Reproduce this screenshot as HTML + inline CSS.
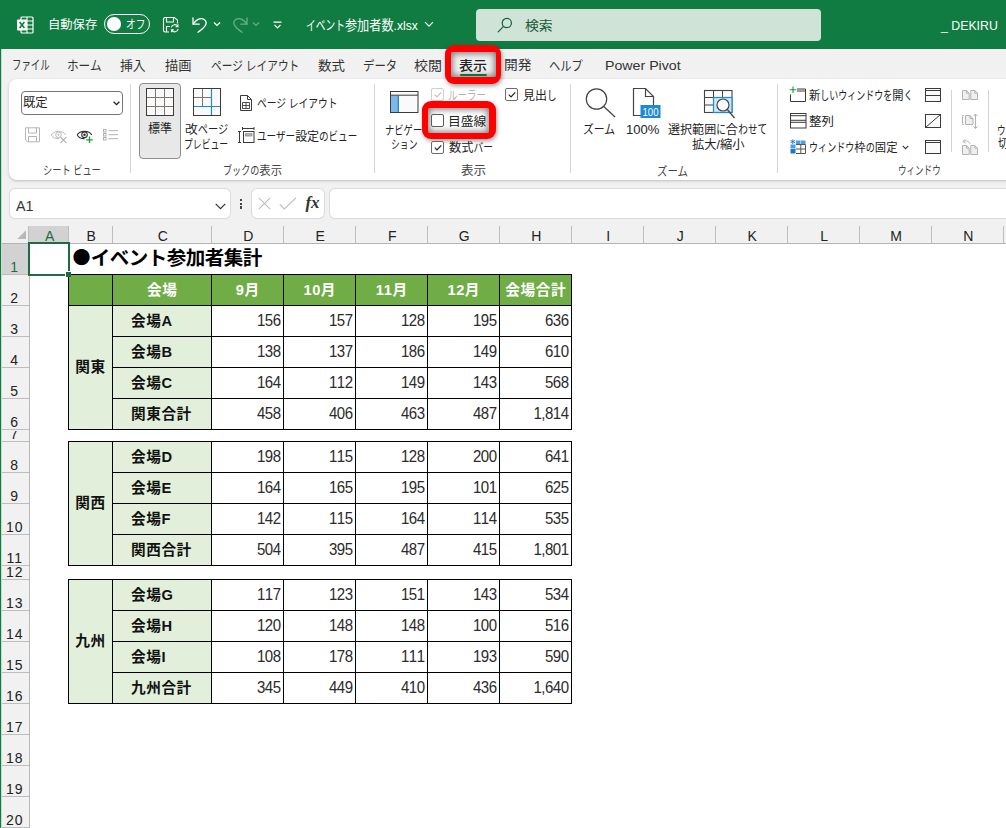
<!DOCTYPE html>
<html lang="ja"><head><meta charset="utf-8"><title>イベント参加者数.xlsx - Excel</title>
<style>
html,body{margin:0;padding:0}
body{width:1006px;height:828px;overflow:hidden;position:relative;background:#fff;font-family:"Liberation Sans","Noto Sans CJK JP",sans-serif;font-size:12px;color:#222}
.a{position:absolute}
.t{position:absolute;white-space:nowrap;line-height:1;transform-origin:0 0}
#title{left:0;top:0;width:1006px;height:49px;background:#107c41}
#lb{left:0;top:49px;width:1px;height:779px;background:#107c41;border-right:1px solid #c4dccf}
#chrome{left:2px;top:49px;width:1004px;height:177px;background:#f1f1f1}
#panel{left:9px;top:79px;width:1010px;height:101px;background:#fff;border-radius:8px;box-shadow:0 1px 3px rgba(0,0,0,.22)}
#colhead{left:2px;top:226px;width:1004px;height:17px;background:#f1f1f1}
#rowhead{left:2px;top:243px;width:27px;height:585px;background:#f1f1f1}
.k{display:inline-block;transform:scaleX(.8);transform-origin:0 50%}
.sep{position:absolute;width:1px;background:#d4d4d4}
.box{position:absolute;background:#fff;border-radius:5px;box-shadow:0 0 0 1px #dcdcdc,0 1px 1px rgba(0,0,0,.10)}
.ch{position:absolute;top:226px;height:17px;text-align:center;padding-left:2.4px;box-sizing:border-box;font-size:14px;line-height:20px;color:#222;font-family:"Liberation Sans",sans-serif}
.rh{position:absolute;left:2px;width:27px;overflow:hidden;font-size:14px;color:#222;font-family:"Liberation Sans",sans-serif;line-height:1}
.rh span{position:absolute;left:-0.8px;width:27px;text-align:center;letter-spacing:1px}
.cell{position:absolute;box-sizing:border-box;white-space:nowrap;overflow:hidden}
.num{text-align:right;font-size:15px;letter-spacing:-0.5px;color:#2b2b2b;font-kerning:none}
.num span{display:inline-block;line-height:1;transform:scaleY(1.12);transform-origin:50% 86%}
.lab{font-weight:bold;font-size:14.67px;letter-spacing:.55px;color:#111}
.hd{font-weight:bold;font-size:14.67px;letter-spacing:.55px;padding-left:.5px;color:#fff;text-align:center}
.cb{position:absolute;width:11px;height:11px;border:1px solid #6a6a6a;border-radius:2px;background:#fff}
</style></head><body>
<div class="a" id="title"></div>
<div class="a" id="lb"></div>
<div class="a" id="chrome"></div>
<div class="a" id="panel"></div>

<!-- ===== title bar ===== -->
<svg class="a" style="left:16px;top:16px" width="18" height="18" viewBox="0 0 18 18">
  <rect x="5" y="1" width="12" height="16" rx="1" fill="none" stroke="#fff" stroke-width="1.2"/>
  <path d="M5 5H17M5 9H17M5 13H17M11 1V17" stroke="#fff" stroke-width="1.1" fill="none"/>
  <rect x="1" y="3.5" width="10" height="11" rx="0.8" fill="#fff"/>
  <path d="M3.6 6L8.4 12M8.4 6L3.6 12" stroke="#107c41" stroke-width="1.6" fill="none"/>
</svg>
<div class="t" style="left:47.7px;top:19.4px;font-size:12px;color:#fff;transform:scaleX(1.026);">自動保存</div>
<div class="a" style="left:104px;top:14px;width:43.500px;height:18px;border:1px solid #fff;border-radius:10px"></div>
<div class="a" style="left:107.300px;top:17.300px;width:13.500px;height:13.500px;border-radius:50%;background:#fff"></div>
<div class="t" style="left:125.8px;top:19.3px;font-size:12.5px;color:#fff;transform:scaleX(0.967);"><span class="k" style="margin-right:-5.00px">オフ</span></div>
<!-- save -->
<svg class="a" style="left:162px;top:16px" width="18" height="18" viewBox="0 0 18 18" fill="none" stroke="#fff" stroke-width="1.1">
  <path d="M7 16H3.2A1.7 1.7 0 0 1 1.5 14.300V3.200A1.700 1.700 0 0 1 3.200 1.500H12.500L15.500 4.200V7.500"/>
  <path d="M4.500 1.500V6H11.500V1.500"/>
  <path d="M4.500 16V10.500H8"/>
  <path d="M9.300 11.300A3.600 3.600 0 0 1 15.800 10.300M16 8.300V10.600H13.700"/>
  <path d="M16.200 13.200A3.600 3.600 0 0 1 9.700 14.200M9.500 16.200V13.900H11.800"/>
</svg>
<!-- undo -->
<svg class="a" style="left:191px;top:16px" width="18" height="18" viewBox="0 0 18 18" fill="none" stroke="#fff" stroke-width="1.3" stroke-linecap="round" stroke-linejoin="round">
  <path d="M2 2V8.200H8.200"/>
  <path d="M2.300 8C5.500 2.500 11.500 1.200 14.200 4.400C16.800 7.500 14 11.500 7 16.200"/>
</svg>
<svg class="a" style="left:213px;top:21px" width="8" height="6" viewBox="0 0 8 6" fill="none" stroke="#fff" stroke-width="1.2"><path d="M1 1.500L4 4.500L7 1.500"/></svg>
<!-- redo (dim) -->
<svg class="a" style="left:231px;top:16px;opacity:.38" width="18" height="18" viewBox="0 0 18 18" fill="none" stroke="#fff" stroke-width="1.3" stroke-linecap="round" stroke-linejoin="round">
  <path d="M16 2V8.200H9.800"/>
  <path d="M15.700 8C12.500 2.500 6.500 1.200 3.800 4.400C1.200 7.500 4 11.500 11 16.200"/>
</svg>
<svg class="a" style="left:252px;top:21px;opacity:.38" width="8" height="6" viewBox="0 0 8 6" fill="none" stroke="#fff" stroke-width="1.2"><path d="M1 1.500L4 4.500L7 1.500"/></svg>
<!-- customize -->
<svg class="a" style="left:273px;top:21px" width="9" height="8" viewBox="0 0 9 8" fill="none" stroke="#fff" stroke-width="1.2"><path d="M0.500 1.200H8.500M1.500 3.800L4.500 6.800L7.500 3.800"/></svg>
<div class="t" style="left:306.3px;top:19.1px;font-size:13.5px;color:#fff;transform:scaleX(0.901);"><span class="k" style="margin-right:-10.80px">イベント</span>参加者数.xlsx</div>
<svg class="a" style="left:424px;top:21px" width="10" height="7" viewBox="0 0 10 7" fill="none" stroke="#fff" stroke-width="1.200"><path d="M1 1.200L5 5.200L9 1.200"/></svg>
<div class="a" style="left:476px;top:9px;width:345px;height:32px;border-radius:4px;background:#cfe3d7"></div>
<svg class="a" style="left:497px;top:17px" width="16" height="16" viewBox="0 0 16 16" fill="none" stroke="#185c37" stroke-width="1.2" stroke-linecap="round"><circle cx="9.800" cy="6" r="4.600"/><path d="M6.500 9.400L1.200 14.800"/></svg>
<div class="t" style="left:525.1px;top:18.6px;font-size:13px;color:#185c37;transform:scaleX(1.067);">検索</div>
<div class="t" style="left:941.3px;top:18.5px;font-size:13.5px;color:#fff;transform:scaleX(0.913);">_ DEKIRU</div>

<!-- ===== tab strip ===== -->
<div class="a" style="left:444.5px;top:45.4px;width:56.9px;height:38.2px;border-radius:9px;background:#ff0000;box-shadow:1px 2px 4px rgba(0,0,0,.38)"></div><div class="a" style="left:450.9px;top:51.8px;width:44.7px;height:25.6px;border-radius:2px;background:#f2f2f2;box-shadow:inset 0 0 6px 1.5px rgba(0,0,0,.5)"></div>
<div class="t" style="left:12.0px;top:57.8px;font-size:13px;color:#333;transform:scaleX(0.905);"><span class="k" style="margin-right:-10.40px">ファイル</span></div><div class="t" style="left:66.5px;top:58.8px;font-size:13px;color:#333;transform:scaleX(1.117);"><span class="k" style="margin-right:-7.80px">ホーム</span></div><div class="t" style="left:120.3px;top:58.8px;font-size:13px;color:#333;transform:scaleX(0.988);">挿入</div><div class="t" style="left:165.0px;top:58.8px;font-size:13px;color:#333;transform:scaleX(1.020);">描画</div><div class="t" style="left:211.0px;top:58.8px;font-size:13px;color:#333;transform:scaleX(1.028);"><span class="k" style="margin-right:-21.40px">ページ レイアウト</span></div><div class="t" style="left:318.2px;top:58.8px;font-size:13px;color:#333;transform:scaleX(1.032);">数式</div><div class="t" style="left:362.6px;top:59.3px;font-size:13px;color:#333;transform:scaleX(1.097);"><span class="k" style="margin-right:-7.80px">データ</span></div><div class="t" style="left:413.8px;top:58.8px;font-size:13px;color:#333;transform:scaleX(1.075);">校閲</div><div class="t" style="left:458.9px;top:58.8px;font-size:13px;color:#222;transform:scaleX(1.079);font-weight:500">表示</div><div class="t" style="left:504.4px;top:58.3px;font-size:13px;color:#333;transform:scaleX(1.054);">開発</div><div class="t" style="left:548.9px;top:58.8px;font-size:13px;color:#333;transform:scaleX(1.083);"><span class="k" style="margin-right:-7.80px">ヘルプ</span></div><div class="t" style="left:604.7px;top:58.8px;font-size:13px;color:#333;transform:scaleX(1.091);">Power Pivot</div>
<div class="a" style="left:460px;top:73.800px;width:27px;height:2.200px;border-radius:1px;background:#0f703b"></div>

<!-- ===== ribbon: sheet view group ===== -->
<div class="a" style="left:21px;top:91px;width:100px;height:22px;border:1px solid #757575;border-radius:4px;background:#fff"></div>
<div class="t" style="left:22.6px;top:97.3px;font-size:12px;color:#222;transform:scaleX(1.026);">既定</div>
<svg class="a" style="left:113px;top:101px" width="7" height="5" viewBox="0 0 7 5" fill="none" stroke="#222" stroke-width="1.3"><path d="M0.600 0.800L3.500 3.700L6.400 0.800"/></svg>
<svg class="a" style="left:24px;top:127px" width="17" height="16" viewBox="0 0 17 16" fill="none" stroke="#b4b4b4" stroke-width="1"><path d="M1.500 0.800H15.500V14.800H3.500L1.500 12.800Z"/><path d="M4.500 0.800V6H12.500V0.800"/><path d="M4.500 14.800V9.500H12.500V14.800"/></svg>
<svg class="a" style="left:50px;top:129px" width="18" height="15" viewBox="0 0 18 15" fill="none" stroke="#b9b9b9" stroke-width="1"><path d="M1.200 6C4 1.200 13 1.200 15.800 6"/><path d="M1.200 6C3 8.800 6 9.800 9 9.600"/><circle cx="8.500" cy="5.800" r="2.800"/><circle cx="8.500" cy="5.800" r="0.600" fill="#b9b9b9"/><path d="M10.500 8L16.500 14M16.500 8L10.500 14" stroke-width="1.100"/></svg>
<svg class="a" style="left:76px;top:129px" width="18" height="15" viewBox="0 0 18 15" fill="none" stroke="#333" stroke-width="1.100"><path d="M1.200 6C4 1.200 13 1.200 15.800 6"/><path d="M1.200 6C3 8.800 6 9.800 8.500 9.600"/><circle cx="8.500" cy="5.800" r="2.800"/><circle cx="8.500" cy="5.800" r="0.700" fill="#333"/><path d="M13.500 7.500V14M10.200 10.800H16.800" stroke="#1a9a3c" stroke-width="1.300"/></svg>
<svg class="a" style="left:102px;top:128px" width="17" height="13" viewBox="0 0 17 13" fill="none" stroke="#b0b0b0" stroke-width="1"><rect x="1.500" y="1.500" width="2.500" height="2.500"/><rect x="1.500" y="5.500" width="2.500" height="2.500"/><rect x="1.500" y="9.500" width="2.500" height="2.500"/><path d="M6.500 2.700H16M6.500 6.700H16M6.500 10.700H16"/></svg>
<div class="t" style="left:42.5px;top:165.0px;font-size:12px;color:#444;transform:scaleX(0.959);"><span class="k" style="margin-right:-15.00px">シート ビュー</span></div>
<div class="sep" style="left:130px;top:84px;height:89px"></div>
<!-- ===== workbook views ===== -->
<div class="a" style="left:139px;top:83px;width:39.700px;height:73.700px;border:1px solid #8e8e8e;border-radius:4px;background:#e8e8e8"></div>
<svg class="a" style="left:145px;top:87px" width="30" height="30" viewBox="0 0 30 30" fill="none"><rect x="1.500" y="1.500" width="27" height="27" fill="#fafafa" stroke="#3b3b3b" stroke-width="1"/><path d="M10.500 2V28M19.500 2V28M2 10.500H28M2 19.500H28" stroke="#7d756e" stroke-width="1"/></svg>
<div class="t" style="left:148.4px;top:123.2px;font-size:12px;color:#222;transform:scaleX(1.004);">標準</div>
<svg class="a" style="left:192px;top:87px" width="30" height="30" viewBox="0 0 30 30" fill="none"><rect x="1.500" y="1.500" width="27" height="27" fill="#fafafa" stroke="#3b3b3b" stroke-width="1"/><path d="M10.500 2V19M2 10.500H19" stroke="#7d756e" stroke-width="1"/><path d="M19.500 2V28M2 19.500H28" stroke="#1e8ad6" stroke-width="1.200"/></svg>
<div class="t" style="left:184.8px;top:124.1px;font-size:12px;color:#222;transform:scaleX(1.064);">改<span class="k" style="margin-right:-7.20px">ページ</span></div><div class="t" style="left:184.2px;top:138.7px;font-size:12px;color:#222;transform:scaleX(0.920);"><span class="k" style="margin-right:-12.00px">プレビュー</span></div>
<svg class="a" style="left:239px;top:94px" width="14" height="18" viewBox="0 0 14 18" fill="none" stroke="#3b3b3b" stroke-width="1"><path d="M1.500 1.500H8.500L12.500 5.500V16.500H1.500Z"/><path d="M8.500 1.500V5.500H12.500"/><path d="M3.500 8.500H10.500V14.500H3.500ZM7 8.500V14.500M3.500 11.500H10.500" stroke-width="0.900"/></svg>
<div class="t" style="left:256.8px;top:98.2px;font-size:12px;color:#222;transform:scaleX(1.016);"><span class="k" style="margin-right:-19.80px">ページ レイアウト</span></div>
<svg class="a" style="left:238px;top:127px" width="17" height="17" viewBox="0 0 17 17" fill="none" stroke="#3b3b3b" stroke-width="1"><path d="M4.500 1.500H16M4.500 0V3M16 0V3"/><path d="M1.500 4.500V15.500M0 4.500H3M0 15.500H3"/><rect x="5.500" y="4.500" width="10.500" height="11"/><rect x="7.500" y="6.700" width="6.500" height="2.300" fill="#b5b5b5" stroke="#8a8a8a" stroke-width="0.800"/></svg>
<div class="t" style="left:256.8px;top:131.0px;font-size:12px;color:#222;transform:scaleX(0.999);"><span class="k" style="margin-right:-9.60px">ユーザー</span>設定<span class="k" style="margin-right:-9.60px">のビュー</span></div>
<div class="t" style="left:222.8px;top:165.0px;font-size:12px;color:#444;transform:scaleX(0.946);"><span class="k" style="margin-right:-9.60px">ブックの</span>表示</div>
<div class="sep" style="left:374px;top:84px;height:89px"></div>
<!-- ===== show group ===== -->
<svg class="a" style="left:389px;top:90px" width="30" height="24" viewBox="0 0 30 24" fill="none"><rect x="1.500" y="1.500" width="27.500" height="21" fill="#fafafa" stroke="#3b3b3b" stroke-width="1"/><rect x="2" y="5.500" width="7" height="16.500" fill="#7cb9ea"/><path d="M9.300 5.500V22" stroke="#1e78c8" stroke-width="1.200"/><path d="M1.500 5.200H29" stroke="#3b3b3b" stroke-width="1"/></svg>
<div class="t" style="left:385.0px;top:125.1px;font-size:12px;color:#222;transform:scaleX(0.968);"><span class="k" style="margin-right:-9.60px">ナビゲー</span></div><div class="t" style="left:390.6px;top:138.5px;font-size:12px;color:#222;transform:scaleX(0.919);"><span class="k" style="margin-right:-7.20px">ション</span></div>
<div class="cb" style="left:431px;top:88px;border-color:#cfcfcf"></div>
<svg class="a" style="left:433px;top:90px" width="10" height="9" viewBox="0 0 10 9" fill="none" stroke="#c4c4c4" stroke-width="1.200"><path d="M1.800 4.600L4 6.800L8.300 2.300"/></svg>
<div class="t" style="left:448.3px;top:89.8px;font-size:12px;color:#b5b5b5;transform:scaleX(0.989);"><span class="k" style="margin-right:-9.60px">ルーラー</span></div>
<div class="cb" style="left:505px;top:88px"></div>
<svg class="a" style="left:507px;top:90px" width="10" height="9" viewBox="0 0 10 9" fill="none" stroke="#222" stroke-width="1.200"><path d="M1.800 4.600L4 6.800L8.300 2.300"/></svg>
<div class="t" style="left:522.9px;top:89.7px;font-size:12px;color:#222;transform:scaleX(1.000);">見出<span class="k" style="margin-right:-2.40px">し</span></div>
<!-- red highlight around gridlines checkbox -->
<div class="a" style="left:421.5px;top:101.3px;width:74.3px;height:38.1px;border-radius:9px;background:#ff0000;box-shadow:1px 2px 4px rgba(0,0,0,.38)"></div><div class="a" style="left:428px;top:107.8px;width:61.4px;height:25.2px;border-radius:2px;background:#fff;box-shadow:inset 0 0 6px 1.5px rgba(0,0,0,.5)"></div>
<div class="cb" style="left:431px;top:114px;border-color:#5a5a5a"></div>
<div class="t" style="left:447.9px;top:115.7px;font-size:12px;color:#222;transform:scaleX(1.067);">目盛線</div>
<div class="cb" style="left:431px;top:140.500px"></div>
<svg class="a" style="left:433px;top:142.500px" width="10" height="9" viewBox="0 0 10 9" fill="none" stroke="#222" stroke-width="1.200"><path d="M1.800 4.600L4 6.800L8.300 2.300"/></svg>
<div class="t" style="left:449.3px;top:142.3px;font-size:12px;color:#222;transform:scaleX(1.017);">数式<span class="k" style="margin-right:-4.80px">バー</span></div>
<div class="t" style="left:461.0px;top:165.0px;font-size:12px;color:#444;transform:scaleX(1.048);">表示</div>
<div class="sep" style="left:570px;top:84px;height:89px"></div>
<!-- ===== zoom group ===== -->
<svg class="a" style="left:584px;top:87px" width="33" height="32" viewBox="0 0 33 32" fill="none" stroke="#444" stroke-width="1.200"><circle cx="12.500" cy="12" r="10.200"/><path d="M19.800 19.500L31 30"/></svg>
<div class="t" style="left:583.4px;top:124.3px;font-size:12px;color:#222;transform:scaleX(1.130);"><span class="k" style="margin-right:-7.20px">ズーム</span></div>
<svg class="a" style="left:632px;top:87px" width="30" height="32" viewBox="0 0 30 32" fill="none"><path d="M1.500 1.500H13.500L21.500 9.500V28.500H1.500Z" stroke="#444" stroke-width="1.200" fill="#fff"/><path d="M13.500 1.500V9.500H21.500" stroke="#444" stroke-width="1.200"/><rect x="8.500" y="18" width="20" height="13" fill="#1e8ad6"/><text x="18.500" y="28.800" font-family="'Liberation Sans',sans-serif" font-size="10.500" fill="#fff" text-anchor="middle" textLength="16" lengthAdjust="spacingAndGlyphs">100</text></svg>
<div class="t" style="left:626.4px;top:123.8px;font-size:12px;color:#222;transform:scaleX(1.086);">100%</div>
<svg class="a" style="left:703px;top:89px" width="33" height="31" viewBox="0 0 33 31" fill="none"><rect x="1.500" y="1.500" width="27.500" height="22" stroke="#444" stroke-width="1.100" fill="#fafafa"/><path d="M1.500 8.500H29M1.500 16H10.500M10.500 1.500V23.500M19.500 1.500V8.500" stroke="#444" stroke-width="1"/><rect x="10.500" y="8.500" width="18.500" height="15" fill="#cde5f7" stroke="#1e8ad6" stroke-width="1.200"/><circle cx="20" cy="16" r="6" fill="#fafafa" stroke="#444" stroke-width="1.200"/><path d="M24.300 20.500L31.500 29" stroke="#444" stroke-width="1.300"/></svg>
<div class="t" style="left:667.7px;top:124.1px;font-size:12px;color:#222;transform:scaleX(1.004);">選択範囲<span class="k" style="margin-right:-2.40px">に</span>合<span class="k" style="margin-right:-7.20px">わせて</span></div><div class="t" style="left:692.0px;top:138.8px;font-size:12px;color:#222;transform:scaleX(1.022);">拡大/縮小</div>
<div class="t" style="left:657.4px;top:165.5px;font-size:12px;color:#444;transform:scaleX(1.089);"><span class="k" style="margin-right:-7.20px">ズーム</span></div>
<div class="sep" style="left:777px;top:84px;height:89px"></div>
<!-- ===== window group ===== -->
<svg class="a" style="left:789px;top:86px" width="18" height="17" viewBox="0 0 18 17" fill="none" stroke="#3b3b3b" stroke-width="1"><path d="M8 3H16.500V15.500H1.500V8.500"/><path d="M8 5H16.500"/><path d="M4 0.500V7M0.700 3.700H7.300" stroke="#1a9a3c" stroke-width="1.100"/></svg>
<div class="t" style="left:809.2px;top:90.4px;font-size:12px;color:#222;transform:scaleX(0.937);">新<span class="k" style="margin-right:-19.20px">しいウィンドウを</span>開<span class="k" style="margin-right:-2.40px">く</span></div>
<svg class="a" style="left:789px;top:112px" width="18" height="17" viewBox="0 0 18 17" fill="none" stroke="#3b3b3b" stroke-width="1"><rect x="1.500" y="1.500" width="15.500" height="14.500"/><path d="M1.500 3.700H17M1.500 8.300H17M1.500 10.300H17"/></svg>
<div class="t" style="left:809.1px;top:116.3px;font-size:12px;color:#222;transform:scaleX(1.036);">整列</div>
<svg class="a" style="left:789px;top:139px" width="18" height="16" viewBox="0 0 18 16" fill="none"><rect x="1.500" y="5.500" width="5" height="4" fill="#4aa0e6"/><rect x="1.500" y="10" width="5" height="4.500" fill="#1e78c8"/><rect x="7" y="1.500" width="4.500" height="3.500" fill="#4aa0e6"/><rect x="12" y="1.500" width="4.500" height="3.500" fill="#4aa0e6"/><path d="M7 5.500H16.500V14.500H7M11.800 5.500V14.500M7 10H16.500" stroke="#555" stroke-width="1"/><path d="M3.800 0.300V5M1.500 1.500L6 3.800M6 1.500L1.500 3.800" stroke="#1e78c8" stroke-width="0.900"/></svg>
<div class="t" style="left:809.2px;top:142.4px;font-size:12px;color:#222;transform:scaleX(0.945);"><span class="k" style="margin-right:-12.00px">ウィンドウ</span>枠<span class="k" style="margin-right:-2.40px">の</span>固定</div>
<svg class="a" style="left:902px;top:145px" width="7" height="5" viewBox="0 0 7 5" fill="none" stroke="#333" stroke-width="1.100"><path d="M0.700 0.800L3.500 3.600L6.300 0.800"/></svg>
<svg class="a" style="left:924px;top:87px" width="19" height="16" viewBox="0 0 19 16" fill="none" stroke="#3b3b3b" stroke-width="1"><rect x="1.500" y="1.500" width="15" height="13" fill="#fafafa"/><path d="M1.500 3.500H16.500M1.500 8.500H16.500"/></svg>
<svg class="a" style="left:924px;top:113px" width="19" height="16" viewBox="0 0 19 16" fill="none" stroke="#3b3b3b" stroke-width="1"><rect x="1.500" y="1.500" width="15" height="13" fill="#fafafa"/><path d="M1.500 14.500L16.500 1.500"/></svg>
<svg class="a" style="left:924px;top:139px" width="19" height="16" viewBox="0 0 19 16" fill="none" stroke="#3b3b3b" stroke-width="1"><rect x="1.500" y="1.500" width="15" height="13" fill="#fafafa"/><path d="M1.500 3.500H16.500"/></svg>
<div class="sep" style="left:951px;top:90px;height:62px"></div>
<svg class="a" style="left:962px;top:90px" width="17" height="10" viewBox="0 0 17 10" fill="#efefef" stroke="#b2b2b2" stroke-width="1"><path d="M0.500 0.500H4.500L7.200 3.200V9.500H0.500Z"/><path d="M4.500 0.500V3.200H7.200" fill="none"/><path d="M8.800 0.500H12.800L15.500 3.200V9.500H8.800Z"/><path d="M12.800 0.500V3.200H15.500" fill="none"/></svg>
<svg class="a" style="left:962px;top:113px" width="17" height="17" viewBox="0 0 17 17" fill="none" stroke="#b2b2b2" stroke-width="1"><path d="M2 2.500H0.500V11.500H2"/><path d="M3.500 2.500H8L11 5.500V11.500H3.500Z" fill="#efefef"/><path d="M8 2.500V5.500H11"/><path d="M13.500 1V15.500M11.500 3L13.500 1L15.500 3M11.500 13.500L13.500 15.500L15.500 13.500"/></svg>
<svg class="a" style="left:962px;top:138px" width="17" height="17" viewBox="0 0 17 17" fill="#efefef" stroke="#b2b2b2" stroke-width="1"><path d="M0.500 7.500H4.500L7.200 10.200V16.500H0.500Z"/><path d="M4.500 7.500V10.200H7.200" fill="none"/><path d="M8.800 7.500H12.800L15.500 10.200V16.500H8.800Z"/><path d="M12.800 7.500V10.200H15.500" fill="none"/><path d="M1 3.500C4 2.200 7 3.200 8 5.800M3.200 1.200L1 3.500L3.500 5.300" fill="none"/></svg>
<div class="sep" style="left:988px;top:90px;height:62px"></div>
<div class="t" style="left:996.8px;top:124.6px;font-size:12px;color:#222;transform:scaleX(0.898);"><span class="k" style="margin-right:-12.00px">ウィンドウ</span></div><div class="t" style="left:997.7px;top:137.8px;font-size:12px;color:#222;transform:scaleX(0.914);">切<span class="k" style="margin-right:-2.40px">り</span>替<span class="k" style="margin-right:-2.40px">え</span></div>
<div class="t" style="left:898.0px;top:164.8px;font-size:12px;color:#444;transform:scaleX(0.889);"><span class="k" style="margin-right:-12.00px">ウィンドウ</span></div>

<!-- ===== formula bar ===== -->
<div class="box" style="left:10px;top:189px;width:219.500px;height:29px"></div>
<div class="t" style="left:15.9px;top:198.6px;font-size:14px;color:#333;transform:scaleX(1.018);">A1</div>
<svg class="a" style="left:215px;top:202.500px" width="11" height="7" viewBox="0 0 11 7" fill="none" stroke="#333" stroke-width="1.200"><path d="M0.700 0.800L5.500 5.600L10.300 0.800"/></svg>
<div class="a" style="left:240px;top:199px;width:2.200px;height:2.200px;background:#444"></div><div class="a" style="left:240px;top:202.700px;width:2.200px;height:2.200px;background:#444"></div><div class="a" style="left:240px;top:206.400px;width:2.200px;height:2.200px;background:#444"></div>
<div class="box" style="left:252px;top:189px;width:72px;height:29px"></div>
<svg class="a" style="left:258px;top:197px" width="13" height="13" viewBox="0 0 13 13" fill="none" stroke="#bdbdbd" stroke-width="1.100"><path d="M0.800 0.800L12.200 12.200M12.200 0.800L0.800 12.200"/></svg>
<svg class="a" style="left:279px;top:197px" width="18" height="13" viewBox="0 0 18 13" fill="none" stroke="#bdbdbd" stroke-width="1.100"><path d="M0.800 7.500L5.300 12L17 0.800"/></svg>
<div class="t" style="left:305.500px;top:194px;font-family:'Liberation Serif',serif;font-style:italic;font-weight:bold;font-size:17px;color:#333;letter-spacing:-0.2px">fx</div>
<div class="box" style="left:330px;top:189px;width:700px;height:29px"></div>

<div class="a" id="colhead"></div>
<div class="a" id="rowhead"></div>
<div class="a" style="left:29px;top:226px;width:39px;height:17px;background:#d2d2d2"></div>
<div class="a" style="left:2px;top:244px;width:27px;height:30px;background:#d2d2d2"></div>
<svg class="a" style="left:14px;top:228px" width="13" height="13" viewBox="0 0 13 13"><path d="M12 2.200V11H3.200Z" fill="#b9b9b9"/></svg>
<div class="ch" style="left:29px;width:39px;color:#1e6b41">A</div>
<div class="a" style="left:68px;top:226px;width:1px;height:17px;background:#bdbdbd"></div>
<div class="ch" style="left:68px;width:44px;color:#222">B</div>
<div class="a" style="left:112px;top:226px;width:1px;height:17px;background:#bdbdbd"></div>
<div class="ch" style="left:112px;width:99px;color:#222">C</div>
<div class="a" style="left:211px;top:226px;width:1px;height:17px;background:#bdbdbd"></div>
<div class="ch" style="left:211px;width:72px;color:#222">D</div>
<div class="a" style="left:283px;top:226px;width:1px;height:17px;background:#bdbdbd"></div>
<div class="ch" style="left:283px;width:72px;color:#222">E</div>
<div class="a" style="left:355px;top:226px;width:1px;height:17px;background:#bdbdbd"></div>
<div class="ch" style="left:355px;width:72px;color:#222">F</div>
<div class="a" style="left:427px;top:226px;width:1px;height:17px;background:#bdbdbd"></div>
<div class="ch" style="left:427px;width:72px;color:#222">G</div>
<div class="a" style="left:499px;top:226px;width:1px;height:17px;background:#bdbdbd"></div>
<div class="ch" style="left:499px;width:72px;color:#222">H</div>
<div class="a" style="left:571px;top:226px;width:1px;height:17px;background:#bdbdbd"></div>
<div class="ch" style="left:571px;width:72px;color:#222">I</div>
<div class="a" style="left:643px;top:226px;width:1px;height:17px;background:#bdbdbd"></div>
<div class="ch" style="left:643px;width:72px;color:#222">J</div>
<div class="a" style="left:715px;top:226px;width:1px;height:17px;background:#bdbdbd"></div>
<div class="ch" style="left:715px;width:72px;color:#222">K</div>
<div class="a" style="left:787px;top:226px;width:1px;height:17px;background:#bdbdbd"></div>
<div class="ch" style="left:787px;width:72px;color:#222">L</div>
<div class="a" style="left:859px;top:226px;width:1px;height:17px;background:#bdbdbd"></div>
<div class="ch" style="left:859px;width:72px;color:#222">M</div>
<div class="a" style="left:931px;top:226px;width:1px;height:17px;background:#bdbdbd"></div>
<div class="ch" style="left:931px;width:72px;color:#222">N</div>
<div class="a" style="left:1003px;top:226px;width:1px;height:17px;background:#bdbdbd"></div>
<div class="ch" style="left:1003px;width:72px;color:#222">O</div>
<div class="a" style="left:1075px;top:226px;width:1px;height:17px;background:#bdbdbd"></div>
<div class="a" style="left:28px;top:226px;width:1px;height:17px;background:#bdbdbd"></div>
<div class="a" style="left:2px;top:243px;width:1004px;height:1px;background:#b4b4b4"></div>
<div class="a" style="left:29px;top:244px;width:1px;height:584px;background:#b9b9b9"></div>
<div class="rh" style="top:245px;height:29px;color:#1e6b41"><span style="bottom:0.3px">1</span></div>
<div class="a" style="left:2px;top:274px;width:27px;height:1px;background:#bdbdbd"></div>
<div class="rh" style="top:276px;height:29px;color:#222"><span style="bottom:0.3px">2</span></div>
<div class="a" style="left:2px;top:305px;width:27px;height:1px;background:#bdbdbd"></div>
<div class="rh" style="top:307px;height:29px;color:#222"><span style="bottom:0.3px">3</span></div>
<div class="a" style="left:2px;top:336px;width:27px;height:1px;background:#bdbdbd"></div>
<div class="rh" style="top:338px;height:29px;color:#222"><span style="bottom:0.3px">4</span></div>
<div class="a" style="left:2px;top:367px;width:27px;height:1px;background:#bdbdbd"></div>
<div class="rh" style="top:369px;height:29px;color:#222"><span style="bottom:0.3px">5</span></div>
<div class="a" style="left:2px;top:398px;width:27px;height:1px;background:#bdbdbd"></div>
<div class="rh" style="top:400px;height:29px;color:#222"><span style="bottom:0.3px">6</span></div>
<div class="a" style="left:2px;top:429px;width:27px;height:1px;background:#bdbdbd"></div>
<div class="rh" style="top:431px;height:10px;color:#222"><span style="bottom:0.3px">7</span></div>
<div class="a" style="left:2px;top:441px;width:27px;height:1px;background:#bdbdbd"></div>
<div class="rh" style="top:443px;height:29px;color:#222"><span style="bottom:0.3px">8</span></div>
<div class="a" style="left:2px;top:472px;width:27px;height:1px;background:#bdbdbd"></div>
<div class="rh" style="top:474px;height:29px;color:#222"><span style="bottom:0.3px">9</span></div>
<div class="a" style="left:2px;top:503px;width:27px;height:1px;background:#bdbdbd"></div>
<div class="rh" style="top:505px;height:29px;color:#222"><span style="bottom:0.3px">10</span></div>
<div class="a" style="left:2px;top:534px;width:27px;height:1px;background:#bdbdbd"></div>
<div class="rh" style="top:536px;height:29px;color:#222"><span style="bottom:0.3px">11</span></div>
<div class="a" style="left:2px;top:565px;width:27px;height:1px;background:#bdbdbd"></div>
<div class="rh" style="top:567px;height:12px;color:#222"><span style="bottom:0.3px">12</span></div>
<div class="a" style="left:2px;top:579px;width:27px;height:1px;background:#bdbdbd"></div>
<div class="rh" style="top:581px;height:29px;color:#222"><span style="bottom:0.3px">13</span></div>
<div class="a" style="left:2px;top:610px;width:27px;height:1px;background:#bdbdbd"></div>
<div class="rh" style="top:612px;height:29px;color:#222"><span style="bottom:0.3px">14</span></div>
<div class="a" style="left:2px;top:641px;width:27px;height:1px;background:#bdbdbd"></div>
<div class="rh" style="top:643px;height:29px;color:#222"><span style="bottom:0.3px">15</span></div>
<div class="a" style="left:2px;top:672px;width:27px;height:1px;background:#bdbdbd"></div>
<div class="rh" style="top:674px;height:29px;color:#222"><span style="bottom:0.3px">16</span></div>
<div class="a" style="left:2px;top:703px;width:27px;height:1px;background:#bdbdbd"></div>
<div class="rh" style="top:705px;height:29px;color:#222"><span style="bottom:0.3px">17</span></div>
<div class="a" style="left:2px;top:734px;width:27px;height:1px;background:#bdbdbd"></div>
<div class="rh" style="top:736px;height:29px;color:#222"><span style="bottom:0.3px">18</span></div>
<div class="a" style="left:2px;top:765px;width:27px;height:1px;background:#bdbdbd"></div>
<div class="rh" style="top:767px;height:29px;color:#222"><span style="bottom:0.3px">19</span></div>
<div class="a" style="left:2px;top:796px;width:27px;height:1px;background:#bdbdbd"></div>
<div class="rh" style="top:798px;height:29px;color:#222"><span style="bottom:0.3px">20</span></div>
<div class="a" style="left:2px;top:827px;width:27px;height:1px;background:#bdbdbd"></div>
<div class="rh" style="top:829px;height:29px;color:#222"><span style="bottom:0.3px">21</span></div>
<div class="a" style="left:2px;top:858px;width:27px;height:1px;background:#bdbdbd"></div>
<div class="t" id="ttl" style="left:71.7px;top:246.500px;font-size:19.5px;letter-spacing:-0.5px;font-weight:bold;color:#000"><span style="font-family:'Noto Sans CJK JP',sans-serif;font-size:18px;display:inline-block;width:19px;text-align:center;vertical-align:0.5px">●</span>イベント参加者集計</div>
<div class="cell hd" style="left:68px;top:274px;width:45px;height:32px;background:#70ad47;border:1px solid #000;line-height:30px;"></div>
<div class="cell hd" style="left:112px;top:274px;width:100px;height:32px;background:#70ad47;border:1px solid #000;line-height:30px;">会場</div>
<div class="cell hd" style="left:211px;top:274px;width:73px;height:32px;background:#70ad47;border:1px solid #000;line-height:30px;">9月</div>
<div class="cell hd" style="left:283px;top:274px;width:73px;height:32px;background:#70ad47;border:1px solid #000;line-height:30px;">10月</div>
<div class="cell hd" style="left:355px;top:274px;width:73px;height:32px;background:#70ad47;border:1px solid #000;line-height:30px;">11月</div>
<div class="cell hd" style="left:427px;top:274px;width:73px;height:32px;background:#70ad47;border:1px solid #000;line-height:30px;">12月</div>
<div class="cell hd" style="left:499px;top:274px;width:73px;height:32px;background:#70ad47;border:1px solid #000;line-height:30px;">会場合計</div>
<div class="cell lab" style="left:68px;top:305px;width:45px;height:125px;background:#e2efda;border:1px solid #000;line-height:123px;text-align:center">関東</div>
<div class="cell lab" style="left:112px;top:305px;width:100px;height:32px;background:#e2efda;border:1px solid #000;line-height:30px;padding-left:18px">会場A</div>
<div class="cell num" style="left:211px;top:305px;width:73px;height:32px;background:#fff;border:1px solid #000;line-height:30px;padding-right:2.5px"><span>156</span></div>
<div class="cell num" style="left:283px;top:305px;width:73px;height:32px;background:#fff;border:1px solid #000;line-height:30px;padding-right:2.5px"><span>157</span></div>
<div class="cell num" style="left:355px;top:305px;width:73px;height:32px;background:#fff;border:1px solid #000;line-height:30px;padding-right:2.5px"><span>128</span></div>
<div class="cell num" style="left:427px;top:305px;width:73px;height:32px;background:#fff;border:1px solid #000;line-height:30px;padding-right:2.5px"><span>195</span></div>
<div class="cell num" style="left:499px;top:305px;width:73px;height:32px;background:#fff;border:1px solid #000;line-height:30px;padding-right:2.5px"><span>636</span></div>
<div class="cell lab" style="left:112px;top:336px;width:100px;height:32px;background:#e2efda;border:1px solid #000;line-height:30px;padding-left:18px">会場B</div>
<div class="cell num" style="left:211px;top:336px;width:73px;height:32px;background:#fff;border:1px solid #000;line-height:30px;padding-right:2.5px"><span>138</span></div>
<div class="cell num" style="left:283px;top:336px;width:73px;height:32px;background:#fff;border:1px solid #000;line-height:30px;padding-right:2.5px"><span>137</span></div>
<div class="cell num" style="left:355px;top:336px;width:73px;height:32px;background:#fff;border:1px solid #000;line-height:30px;padding-right:2.5px"><span>186</span></div>
<div class="cell num" style="left:427px;top:336px;width:73px;height:32px;background:#fff;border:1px solid #000;line-height:30px;padding-right:2.5px"><span>149</span></div>
<div class="cell num" style="left:499px;top:336px;width:73px;height:32px;background:#fff;border:1px solid #000;line-height:30px;padding-right:2.5px"><span>610</span></div>
<div class="cell lab" style="left:112px;top:367px;width:100px;height:32px;background:#e2efda;border:1px solid #000;line-height:30px;padding-left:18px">会場C</div>
<div class="cell num" style="left:211px;top:367px;width:73px;height:32px;background:#fff;border:1px solid #000;line-height:30px;padding-right:2.5px"><span>164</span></div>
<div class="cell num" style="left:283px;top:367px;width:73px;height:32px;background:#fff;border:1px solid #000;line-height:30px;padding-right:2.5px"><span>112</span></div>
<div class="cell num" style="left:355px;top:367px;width:73px;height:32px;background:#fff;border:1px solid #000;line-height:30px;padding-right:2.5px"><span>149</span></div>
<div class="cell num" style="left:427px;top:367px;width:73px;height:32px;background:#fff;border:1px solid #000;line-height:30px;padding-right:2.5px"><span>143</span></div>
<div class="cell num" style="left:499px;top:367px;width:73px;height:32px;background:#fff;border:1px solid #000;line-height:30px;padding-right:2.5px"><span>568</span></div>
<div class="cell lab" style="left:112px;top:398px;width:100px;height:32px;background:#e2efda;border:1px solid #000;line-height:30px;padding-left:18px">関東合計</div>
<div class="cell num" style="left:211px;top:398px;width:73px;height:32px;background:#fff;border:1px solid #000;line-height:30px;padding-right:2.5px"><span>458</span></div>
<div class="cell num" style="left:283px;top:398px;width:73px;height:32px;background:#fff;border:1px solid #000;line-height:30px;padding-right:2.5px"><span>406</span></div>
<div class="cell num" style="left:355px;top:398px;width:73px;height:32px;background:#fff;border:1px solid #000;line-height:30px;padding-right:2.5px"><span>463</span></div>
<div class="cell num" style="left:427px;top:398px;width:73px;height:32px;background:#fff;border:1px solid #000;line-height:30px;padding-right:2.5px"><span>487</span></div>
<div class="cell num" style="left:499px;top:398px;width:73px;height:32px;background:#fff;border:1px solid #000;line-height:30px;padding-right:2.5px"><span>1,814</span></div>
<div class="cell lab" style="left:68px;top:441px;width:45px;height:125px;background:#e2efda;border:1px solid #000;line-height:123px;text-align:center">関西</div>
<div class="cell lab" style="left:112px;top:441px;width:100px;height:32px;background:#e2efda;border:1px solid #000;line-height:30px;padding-left:18px">会場D</div>
<div class="cell num" style="left:211px;top:441px;width:73px;height:32px;background:#fff;border:1px solid #000;line-height:30px;padding-right:2.5px"><span>198</span></div>
<div class="cell num" style="left:283px;top:441px;width:73px;height:32px;background:#fff;border:1px solid #000;line-height:30px;padding-right:2.5px"><span>115</span></div>
<div class="cell num" style="left:355px;top:441px;width:73px;height:32px;background:#fff;border:1px solid #000;line-height:30px;padding-right:2.5px"><span>128</span></div>
<div class="cell num" style="left:427px;top:441px;width:73px;height:32px;background:#fff;border:1px solid #000;line-height:30px;padding-right:2.5px"><span>200</span></div>
<div class="cell num" style="left:499px;top:441px;width:73px;height:32px;background:#fff;border:1px solid #000;line-height:30px;padding-right:2.5px"><span>641</span></div>
<div class="cell lab" style="left:112px;top:472px;width:100px;height:32px;background:#e2efda;border:1px solid #000;line-height:30px;padding-left:18px">会場E</div>
<div class="cell num" style="left:211px;top:472px;width:73px;height:32px;background:#fff;border:1px solid #000;line-height:30px;padding-right:2.5px"><span>164</span></div>
<div class="cell num" style="left:283px;top:472px;width:73px;height:32px;background:#fff;border:1px solid #000;line-height:30px;padding-right:2.5px"><span>165</span></div>
<div class="cell num" style="left:355px;top:472px;width:73px;height:32px;background:#fff;border:1px solid #000;line-height:30px;padding-right:2.5px"><span>195</span></div>
<div class="cell num" style="left:427px;top:472px;width:73px;height:32px;background:#fff;border:1px solid #000;line-height:30px;padding-right:2.5px"><span>101</span></div>
<div class="cell num" style="left:499px;top:472px;width:73px;height:32px;background:#fff;border:1px solid #000;line-height:30px;padding-right:2.5px"><span>625</span></div>
<div class="cell lab" style="left:112px;top:503px;width:100px;height:32px;background:#e2efda;border:1px solid #000;line-height:30px;padding-left:18px">会場F</div>
<div class="cell num" style="left:211px;top:503px;width:73px;height:32px;background:#fff;border:1px solid #000;line-height:30px;padding-right:2.5px"><span>142</span></div>
<div class="cell num" style="left:283px;top:503px;width:73px;height:32px;background:#fff;border:1px solid #000;line-height:30px;padding-right:2.5px"><span>115</span></div>
<div class="cell num" style="left:355px;top:503px;width:73px;height:32px;background:#fff;border:1px solid #000;line-height:30px;padding-right:2.5px"><span>164</span></div>
<div class="cell num" style="left:427px;top:503px;width:73px;height:32px;background:#fff;border:1px solid #000;line-height:30px;padding-right:2.5px"><span>114</span></div>
<div class="cell num" style="left:499px;top:503px;width:73px;height:32px;background:#fff;border:1px solid #000;line-height:30px;padding-right:2.5px"><span>535</span></div>
<div class="cell lab" style="left:112px;top:534px;width:100px;height:32px;background:#e2efda;border:1px solid #000;line-height:30px;padding-left:18px">関西合計</div>
<div class="cell num" style="left:211px;top:534px;width:73px;height:32px;background:#fff;border:1px solid #000;line-height:30px;padding-right:2.5px"><span>504</span></div>
<div class="cell num" style="left:283px;top:534px;width:73px;height:32px;background:#fff;border:1px solid #000;line-height:30px;padding-right:2.5px"><span>395</span></div>
<div class="cell num" style="left:355px;top:534px;width:73px;height:32px;background:#fff;border:1px solid #000;line-height:30px;padding-right:2.5px"><span>487</span></div>
<div class="cell num" style="left:427px;top:534px;width:73px;height:32px;background:#fff;border:1px solid #000;line-height:30px;padding-right:2.5px"><span>415</span></div>
<div class="cell num" style="left:499px;top:534px;width:73px;height:32px;background:#fff;border:1px solid #000;line-height:30px;padding-right:2.5px"><span>1,801</span></div>
<div class="cell lab" style="left:68px;top:579px;width:45px;height:125px;background:#e2efda;border:1px solid #000;line-height:123px;text-align:center">九州</div>
<div class="cell lab" style="left:112px;top:579px;width:100px;height:32px;background:#e2efda;border:1px solid #000;line-height:30px;padding-left:18px">会場G</div>
<div class="cell num" style="left:211px;top:579px;width:73px;height:32px;background:#fff;border:1px solid #000;line-height:30px;padding-right:2.5px"><span>117</span></div>
<div class="cell num" style="left:283px;top:579px;width:73px;height:32px;background:#fff;border:1px solid #000;line-height:30px;padding-right:2.5px"><span>123</span></div>
<div class="cell num" style="left:355px;top:579px;width:73px;height:32px;background:#fff;border:1px solid #000;line-height:30px;padding-right:2.5px"><span>151</span></div>
<div class="cell num" style="left:427px;top:579px;width:73px;height:32px;background:#fff;border:1px solid #000;line-height:30px;padding-right:2.5px"><span>143</span></div>
<div class="cell num" style="left:499px;top:579px;width:73px;height:32px;background:#fff;border:1px solid #000;line-height:30px;padding-right:2.5px"><span>534</span></div>
<div class="cell lab" style="left:112px;top:610px;width:100px;height:32px;background:#e2efda;border:1px solid #000;line-height:30px;padding-left:18px">会場H</div>
<div class="cell num" style="left:211px;top:610px;width:73px;height:32px;background:#fff;border:1px solid #000;line-height:30px;padding-right:2.5px"><span>120</span></div>
<div class="cell num" style="left:283px;top:610px;width:73px;height:32px;background:#fff;border:1px solid #000;line-height:30px;padding-right:2.5px"><span>148</span></div>
<div class="cell num" style="left:355px;top:610px;width:73px;height:32px;background:#fff;border:1px solid #000;line-height:30px;padding-right:2.5px"><span>148</span></div>
<div class="cell num" style="left:427px;top:610px;width:73px;height:32px;background:#fff;border:1px solid #000;line-height:30px;padding-right:2.5px"><span>100</span></div>
<div class="cell num" style="left:499px;top:610px;width:73px;height:32px;background:#fff;border:1px solid #000;line-height:30px;padding-right:2.5px"><span>516</span></div>
<div class="cell lab" style="left:112px;top:641px;width:100px;height:32px;background:#e2efda;border:1px solid #000;line-height:30px;padding-left:18px">会場I</div>
<div class="cell num" style="left:211px;top:641px;width:73px;height:32px;background:#fff;border:1px solid #000;line-height:30px;padding-right:2.5px"><span>108</span></div>
<div class="cell num" style="left:283px;top:641px;width:73px;height:32px;background:#fff;border:1px solid #000;line-height:30px;padding-right:2.5px"><span>178</span></div>
<div class="cell num" style="left:355px;top:641px;width:73px;height:32px;background:#fff;border:1px solid #000;line-height:30px;padding-right:2.5px"><span>111</span></div>
<div class="cell num" style="left:427px;top:641px;width:73px;height:32px;background:#fff;border:1px solid #000;line-height:30px;padding-right:2.5px"><span>193</span></div>
<div class="cell num" style="left:499px;top:641px;width:73px;height:32px;background:#fff;border:1px solid #000;line-height:30px;padding-right:2.5px"><span>590</span></div>
<div class="cell lab" style="left:112px;top:672px;width:100px;height:32px;background:#e2efda;border:1px solid #000;line-height:30px;padding-left:18px">九州合計</div>
<div class="cell num" style="left:211px;top:672px;width:73px;height:32px;background:#fff;border:1px solid #000;line-height:30px;padding-right:2.5px"><span>345</span></div>
<div class="cell num" style="left:283px;top:672px;width:73px;height:32px;background:#fff;border:1px solid #000;line-height:30px;padding-right:2.5px"><span>449</span></div>
<div class="cell num" style="left:355px;top:672px;width:73px;height:32px;background:#fff;border:1px solid #000;line-height:30px;padding-right:2.5px"><span>410</span></div>
<div class="cell num" style="left:427px;top:672px;width:73px;height:32px;background:#fff;border:1px solid #000;line-height:30px;padding-right:2.5px"><span>436</span></div>
<div class="cell num" style="left:499px;top:672px;width:73px;height:32px;background:#fff;border:1px solid #000;line-height:30px;padding-right:2.5px"><span>1,640</span></div>
<div class="a" style="left:28px;top:242px;width:38px;height:30px;border:2px solid #1e6b41"></div>
<div class="a" style="left:65px;top:271px;width:5px;height:5px;background:#1e6b41;border:1px solid #fff;border-right:0;border-bottom:0"></div>
</body></html>
